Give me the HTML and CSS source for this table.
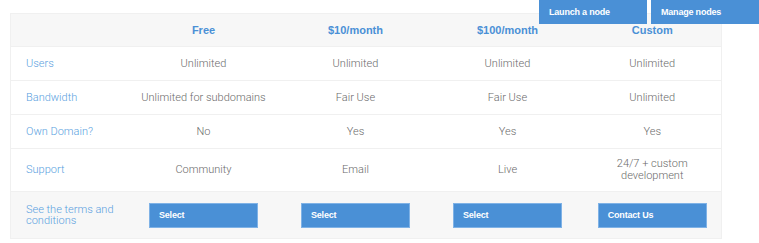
FILE: index.html
```html
<!DOCTYPE html>
<html>
<head>
    <title>Plans</title>
    <link rel="stylesheet" href="styles.css">
</head>
<body>
    <div class="top-nav">
        <a href="#" class="nav-button">Launch a node</a>
        <a href="#" class="nav-button">Manage nodes</a>
    </div>

    <div class="pricing-container">
        <table class="pricing-table">
            <colgroup>
                <col class="col-label">
                <col class="col-plan">
                <col class="col-plan">
                <col class="col-plan">
                <col class="col-last">
            </colgroup>
            <thead>
                <tr>
                    <th></th>
                    <th>Free</th>
                    <th>$10/month</th>
                    <th>$100/month</th>
                    <th>Custom</th>
                </tr>
            </thead>
            <tbody>
                <tr>
                    <td class="label">Users</td>
                    <td>Unlimited</td>
                    <td>Unlimited</td>
                    <td>Unlimited</td>
                    <td>Unlimited</td>
                </tr>
                <tr>
                    <td class="label">Bandwidth</td>
                    <td>Unlimited for subdomains</td>
                    <td>Fair Use</td>
                    <td>Fair Use</td>
                    <td>Unlimited</td>
                </tr>
                <tr>
                    <td class="label">Own Domain?</td>
                    <td>No</td>
                    <td>Yes</td>
                    <td>Yes</td>
                    <td>Yes</td>
                </tr>
                <tr class="tall">
                    <td class="label">Support</td>
                    <td>Community</td>
                    <td>Email</td>
                    <td>Live</td>
                    <td>24/7 + custom<br>development</td>
                </tr>
            </tbody>
            <tfoot>
                <tr>
                    <td class="label"><a href="#">See the terms and conditions</a></td>
                    <td><a href="#" class="select-button">Select</a></td>
                    <td><a href="#" class="select-button">Select</a></td>
                    <td><a href="#" class="select-button">Select</a></td>
                    <td><a href="#" class="select-button">Contact Us</a></td>
                </tr>
            </tfoot>
        </table>
    </div>
</body>
</html>
```

FILE: styles.css
```css
body {
    font-family: Roboto, "Liberation Sans", sans-serif;
    margin: 0;
    background-color: #fff;
}

.top-nav {
    position: absolute;
    top: 0;
    right: 0;
    display: flex;
    gap: 4px;
}

.nav-button {
    display: block;
    width: 108px;
    height: 24px;
    line-height: 24px;
    padding-left: 10px;
    box-sizing: border-box;
    background-color: #4a90d6;
    color: #fff;
    font-family: "Liberation Sans", Arial, sans-serif;
    font-weight: bold;
    font-size: 9px;
    letter-spacing: -0.2px;
    text-decoration: none;
}

.pricing-container {
    padding: 13px 0 0 10px;
}

.pricing-table {
    width: 711px;
    border-collapse: collapse;
    table-layout: fixed;
    border: 1px solid #f0f0f0;
}

.col-label {
    width: 117px;
}

.col-plan {
    width: 152px;
}

.col-last {
    width: 138px;
}

.pricing-table th {
    height: 32px;
    padding: 0;
    background-color: #f7f7f7;
    color: #4a90d6;
    font-family: "Liberation Sans", Arial, sans-serif;
    font-weight: bold;
    font-size: 11px;
    text-align: center;
}

.pricing-table td {
    height: 33px;
    padding: 0;
    border-top: 1px solid #f0f0f0;
    color: #6b6b6b;
    font-size: 11px;
    font-weight: 300;
    line-height: 12px;
    text-align: center;
}

.pricing-table tr.tall td {
    height: 42px;
}

.pricing-table td.label {
    text-align: left;
    padding-left: 15px;
    color: #5a9fe0;
}

.pricing-table td.label a {
    color: #5a9fe0;
    text-decoration: none;
}

.pricing-table tfoot td {
    height: 46px;
    background-color: #f7f7f7;
    line-height: 11px;
}

.select-button {
    display: block;
    width: 109px;
    height: 25px;
    line-height: 23px;
    margin: 0 auto;
    padding-left: 9px;
    box-sizing: border-box;
    border: 1px solid #7fb2e6;
    background-color: #4a90d6;
    color: #fff;
    font-family: "Liberation Sans", Arial, sans-serif;
    font-weight: bold;
    font-size: 9px;
    letter-spacing: -0.2px;
    text-align: left;
    text-decoration: none;
}
```
